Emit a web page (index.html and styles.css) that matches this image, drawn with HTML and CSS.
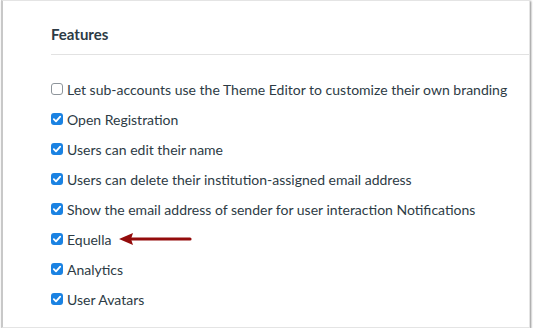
FILE: index.html
```html
<!DOCTYPE html>
<html lang="en">

<head>
    <meta charset="UTF-8">
    <title>Features</title>
    <link rel="stylesheet" href="styles.css">
</head>

<body>

    <div class="frame">
        <h2 class="title">Features</h2>
        <ul class="features">
            <li><span class="box"></span>Let sub-accounts use the Theme Editor to customize their own branding</li>
            <li><span class="box checked"></span>Open Registration</li>
            <li><span class="box checked"></span>Users can edit their name</li>
            <li><span class="box checked"></span>Users can delete their institution-assigned email address</li>
            <li><span class="box checked"></span>Show the email address of sender for user interaction Notifications</li>
            <li><span class="box checked"></span>Equella
                <svg class="arrow" width="76" height="14" viewBox="0 0 76 14">
                    <path d="M12 7 H72" stroke="#930b0b" stroke-width="3.2" stroke-linecap="round" />
                    <path d="M1 7 L15 1 L13 7 L15 13 Z" fill="#930b0b" />
                </svg>
            </li>
            <li><span class="box checked"></span>Analytics</li>
            <li><span class="box checked"></span>User Avatars</li>
        </ul>
    </div>

</body>

</html>
```

FILE: styles.css
```css
body {
    margin: 0;
    background: #fff;
    font-family: Lato, "Open Sans", sans-serif;
    color: #2d3b45;
}

.frame {
    box-sizing: border-box;
    width: 529px;
    height: 328px;
    margin-left: 1px;
    border: 1px solid #e4e4e4;
    border-left: 2px solid #c8c8c8;
    box-shadow: 1px 1px 2px rgba(0, 0, 0, 0.45);
    padding: 24px 0 0 48px;
}

.title {
    margin: 0;
    font-size: 15px;
    font-weight: 700;
    line-height: 18px;
    padding-bottom: 11px;
    border-bottom: 1px solid #e2e2e2;
}

.features {
    list-style: none;
    margin: 0;
    padding: 19px 0 0;
}

.features li {
    display: flex;
    align-items: center;
    height: 30px;
    font-size: 14px;
}

.box {
    box-sizing: border-box;
    width: 12px;
    height: 12px;
    margin-right: 4px;
    border: 1px solid #8e959b;
    border-radius: 3px;
    background: #fff;
}

.box.checked {
    border: none;
    background: #1a82e2 url("data:image/svg+xml;utf8,<svg xmlns='http://www.w3.org/2000/svg' viewBox='0 0 12 12'><path d='M2.8 6.2 L5 8.4 L9.2 3.6' fill='none' stroke='white' stroke-width='1.8' stroke-linecap='round' stroke-linejoin='round'/></svg>") no-repeat center;
}

.arrow {
    margin-left: 7px;
}
```
